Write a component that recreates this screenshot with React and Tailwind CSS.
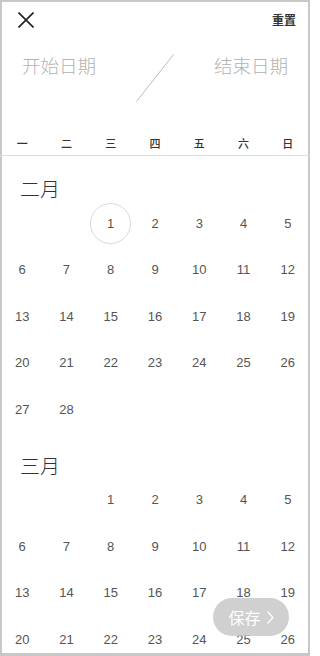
import React from "react";

const weekDays = ["一", "二", "三", "四", "五", "六", "日"];

const months = [
  { title: "二月", offset: 2, days: 28 },
  { title: "三月", offset: 2, days: 31 },
];

const cjk = { fontFamily: '"Noto Sans CJK SC", "Noto Sans", sans-serif' };
const num = { fontFamily: '"Liberation Sans", "Noto Sans", sans-serif' };

const MonthBlock = ({ month, selected }) => {
  const cells = [];
  for (let i = 0; i < month.offset; i++) cells.push(null);
  for (let d = 1; d <= month.days; d++) cells.push(d);
  return (
    <div className="pt-[22px]">
      <h2 className="pl-[20px] text-[20px] leading-[22px] text-[#333] font-light" style={cjk}>
        {month.title}
      </h2>
      <div className="grid grid-cols-7">
        {cells.map((d, i) => (
          <div key={i} className="h-[46.5px] flex items-center justify-center">
            {d && (
              <span
                className={
                  "flex items-center justify-center text-[13px] text-[#555] " +
                  (selected === d ? "w-[41px] h-[41px] rounded-full border border-[#d9d9d9]" : "")
                }
                style={num}
              >
                {d}
              </span>
            )}
          </div>
        ))}
      </div>
    </div>
  );
};

export default function App() {
  return (
    <div className="relative w-[310px] h-[656px] overflow-hidden bg-white shadow-[inset_0_2px_0_0_#c8c8c8,inset_2px_0_0_0_#c8c8c8,inset_-2px_0_0_0_#c8c8c8,inset_0_-3px_0_0_#c8c8c8]">
      <div className="h-[40px] flex items-center justify-between pl-[18px] pr-[14px]">
        <svg width="16" height="16" viewBox="0 0 16 16" className="text-[#222]">
          <path d="M0.5 0.5L15.5 15.5M15.5 0.5L0.5 15.5" stroke="currentColor" strokeWidth="1.6" fill="none" />
        </svg>
        <button className="text-[12px] font-bold text-[#333]" style={cjk}>
          重置
        </button>
      </div>

      <div className="h-[91px] flex justify-between px-[22px] pt-[13px]">
        <span className="text-[18.5px] leading-[24px] text-[#b3b3b3] font-light" style={cjk}>
          开始日期
        </span>
        <svg width="38" height="48" viewBox="0 0 38 48" className="mt-[1px]">
          <line x1="37.5" y1="0.5" x2="0.5" y2="47.5" stroke="#bdbdbd" strokeWidth="1" />
        </svg>
        <span className="text-[18.5px] leading-[24px] text-[#b3b3b3] font-light" style={cjk}>
          结束日期
        </span>
      </div>

      <div className="grid grid-cols-7 h-[25px] border-b border-[#dcdcdc]">
        {weekDays.map((w) => (
          <div key={w} className="flex items-center justify-center text-[11px] font-medium text-[#333]" style={cjk}>
            {w}
          </div>
        ))}
      </div>

      <MonthBlock month={months[0]} selected={1} />
      <MonthBlock month={months[1]} />

      <button
        className="absolute right-[21px] bottom-[20px] w-[76px] h-[38px] rounded-full bg-[#c8c8c8]/85 flex items-center justify-center gap-[6px] text-white"
        style={cjk}
      >
        <span className="text-[16px] leading-none">保存</span>
        <svg width="7" height="13" viewBox="0 0 7 13">
          <path d="M0.5 0.5L6 6.5L0.5 12.5" stroke="#fff" strokeWidth="1.2" fill="none" />
        </svg>
      </button>
    </div>
  );
}
